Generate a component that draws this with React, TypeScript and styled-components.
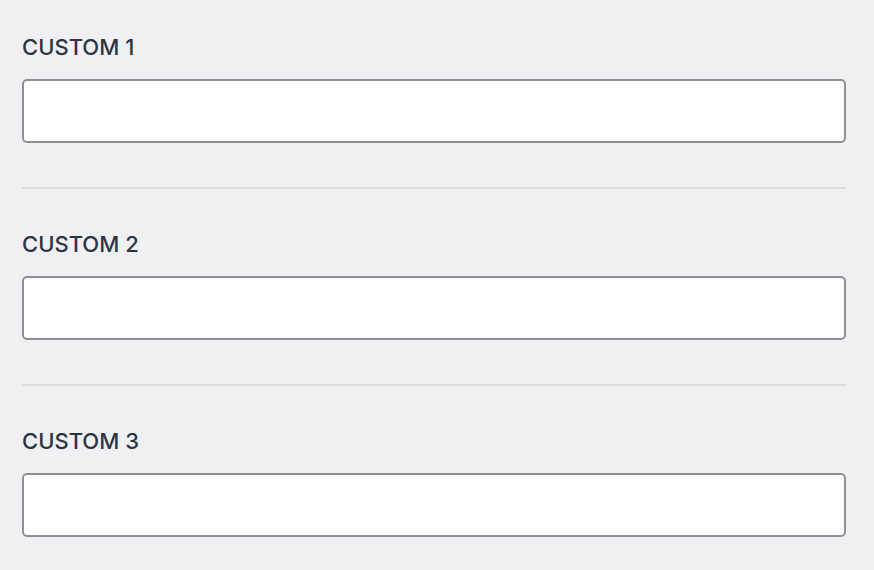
import React from "react";
import styled, { createGlobalStyle } from "styled-components";

const Global = createGlobalStyle`
  html, body {
    margin: 0;
    padding: 0;
    background: #f0f0f2;
  }
  body {
    font-family: Inter, "Liberation Sans", Arial, sans-serif;
  }
`;

const Page = styled.div`
  width: 874px;
  min-height: 570px;
  box-sizing: border-box;
  padding: 33px 28px 0 22px;
  display: flex;
  flex-direction: column;
`;

const Field = styled.div`
  display: flex;
  flex-direction: column;
  gap: 18px;
`;

const Label = styled.label`
  font-size: 22px;
  line-height: 28px;
  font-weight: 500;
  color: #2b3445;
`;

const Input = styled.input`
  box-sizing: border-box;
  width: 100%;
  height: 64px;
  border: 2px solid #8c8f94;
  border-radius: 5px;
  background: #fff;
  font: inherit;
  font-size: 20px;
  padding: 0 14px;
  outline: none;
`;

const Divider = styled.hr`
  border: none;
  height: 2px;
  background: #dcdcde;
  margin: 44px 0 41px;
`;

const fields = ["CUSTOM 1", "CUSTOM 2", "CUSTOM 3"];

export default function App() {
  return (
    <>
      <Global />
      <Page>
        {fields.map((name, i) => (
          <React.Fragment key={name}>
            {i > 0 && <Divider />}
            <Field>
              <Label htmlFor={`custom-${i + 1}`}>{name}</Label>
              <Input id={`custom-${i + 1}`} type="text" />
            </Field>
          </React.Fragment>
        ))}
      </Page>
    </>
  );
}
